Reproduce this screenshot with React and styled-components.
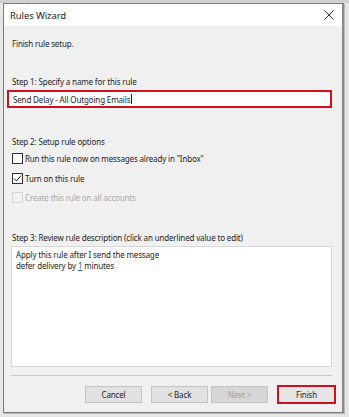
import React from 'react';
import styled, { createGlobalStyle } from 'styled-components';

const Global = createGlobalStyle`
  html, body {
    margin: 0;
    padding: 0;
    background: #e4e4e4;
    font-family: 'Noto Sans', 'Open Sans', sans-serif;
    color: #1e1e1e;
  }
`;

const Screen = styled.div`
  width: 349px;
  height: 417px;
  padding: 3px 0 0 3px;
  box-sizing: border-box;
  background: linear-gradient(#d0d0d0 0 3px, #e6e6e6 3px);
`;

const Window = styled.div`
  width: 341px;
  height: 410px;
  box-sizing: border-box;
  border: 1px solid #7a7a7a;
  border-right: 2px solid #8a8a8a;
  background: #f0f0f0;
  display: flex;
  flex-direction: column;
  box-shadow: 1px 1px 0 #b8b8b8;
`;

const TitleBar = styled.div`
  height: 22px;
  background: #fff;
  display: flex;
  align-items: center;
  justify-content: space-between;
  padding: 0 8px 0 6px;
  font-size: 9.5px;
  letter-spacing: -0.1px;
`;

const Body = styled.div`
  flex: 1;
  display: flex;
  flex-direction: column;
  padding: 0 8px 0 7px;
  font-size: 8px;
  letter-spacing: -0.15px;
`;

const Text = styled.div`
  margin-top: ${({ $top }) => $top}px;
  padding-left: ${({ $indent }) => $indent || 0}px;
  color: ${({ $muted }) => ($muted ? '#a8a8a8' : '#1e1e1e')};
  line-height: 13px;
  white-space: nowrap;
`;

const NameInput = styled.div`
  margin: 2px 0 0 -4px;
  box-sizing: border-box;
  height: 18px;
  width: 325px;
  border: 2px solid #d0101e;
  background: #fff;
  display: flex;
  align-items: center;
  padding-left: 4px;
`;

const Caret = styled.span`
  display: inline-block;
  width: 1px;
  height: 10px;
  background: #222;
  margin-left: 1px;
`;

const CheckRow = styled.div`
  margin-top: ${({ $top }) => $top}px;
  display: flex;
  align-items: center;
  gap: 2px;
  padding-left: 1px;
  color: ${({ $disabled }) => ($disabled ? '#a8a8a8' : '#1e1e1e')};
  height: 12px;
`;

const Box = styled.span`
  width: 9px;
  height: 9px;
  border: 1px solid ${({ $disabled }) => ($disabled ? '#d6d6d6' : '#333')};
  background: ${({ $disabled }) => ($disabled ? '#f0f0f0' : '#fff')};
  display: flex;
  align-items: center;
  justify-content: center;
`;

const DescBox = styled.div`
  margin: 2px 0 0 0;
  width: 321px;
  height: 121px;
  box-sizing: border-box;
  border: 1px solid #d8d8d8;
  background: #fff;
  padding: 2px 4px;
  line-height: 11px;
`;

const Link = styled.span`
  color: #2a5aa8;
  text-decoration: underline;
`;

const Separator = styled.div`
  margin: 8px 0 0 0;
  width: 321px;
  height: 1px;
  background: #c8c8c8;
`;

const ButtonRow = styled.div`
  margin: 10px -2px 0 0;
  display: flex;
  justify-content: flex-end;
  gap: 9px;
`;

const Pair = styled.div`
  display: flex;
  gap: 3px;
`;

const Button = styled.div`
  width: 57px;
  height: 17px;
  box-sizing: border-box;
  border: ${({ $primary }) => ($primary ? '2px solid #d0101e' : '1px solid #c4c4c4')};
  background: ${({ $primary, $disabled }) =>
    $primary ? '#e6e6e6' : $disabled ? '#d6d6d6' : '#e1e1e1'};
  color: ${({ $disabled }) => ($disabled ? '#a0a0a0' : '#1e1e1e')};
  display: flex;
  align-items: center;
  justify-content: center;
  ${({ $primary }) => $primary && 'width: 59px; height: 19px; margin-top: -1px;'}
`;

const Check = () => (
  <svg width="9" height="9" viewBox="0 0 9 9">
    <path d="M1 4.5 L3.5 7 L8 1.5" fill="none" stroke="#222" strokeWidth="1" />
  </svg>
);

export default function App() {
  return (
    <Screen>
      <Global />
      <Window>
        <TitleBar>
          <span>Rules Wizard</span>
          <svg width="10" height="10" viewBox="0 0 10 10">
            <path d="M0.5 0.5 L9.5 9.5 M9.5 0.5 L0.5 9.5" stroke="#333" strokeWidth="1" />
          </svg>
        </TitleBar>
        <Body>
          <Text $top={11} $indent={1}>Finish rule setup.</Text>
          <Text $top={25} $indent={1}>Step 1: Specify a name for this rule</Text>
          <NameInput>
            Send Delay - All Outgoing Emails<Caret />
          </NameInput>
          <Text $top={27} $indent={1}>Step 2: Setup rule options</Text>
          <CheckRow $top={4}>
            <Box />
            Run this rule now on messages already in "Inbox"
          </CheckRow>
          <CheckRow $top={8}>
            <Box>
              <Check />
            </Box>
            Turn on this rule
          </CheckRow>
          <CheckRow $top={7} $disabled>
            <Box $disabled />
            Create this rule on all accounts
          </CheckRow>
          <Text $top={28} $indent={1}>
            Step 3: Review rule description (click an underlined value to edit)
          </Text>
          <DescBox>
            Apply this rule after I send the message
            <br />
            defer delivery by <Link>1</Link> minutes
          </DescBox>
          <Separator />
          <ButtonRow>
            <Button>Cancel</Button>
            <Pair>
              <Button>&lt; Back</Button>
              <Button $disabled>Next &gt;</Button>
            </Pair>
            <Button $primary>Finish</Button>
          </ButtonRow>
        </Body>
      </Window>
    </Screen>
  );
}
